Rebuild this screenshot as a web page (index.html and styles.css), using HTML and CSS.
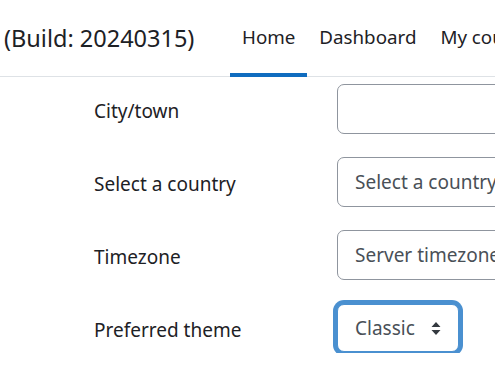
FILE: index.html
```html
<!DOCTYPE html>
<html lang="en">
<head>
<meta charset="utf-8">
<link rel="stylesheet" href="styles.css">
</head>
<body>
<header class="navbar">
  <div class="brand">(Build: 20240315)</div>
  <nav class="primary">
    <a class="nav-link active" href="#">Home</a>
    <a class="nav-link" href="#">Dashboard</a>
    <a class="nav-link" href="#">My courses</a>
  </nav>
</header>
<main class="form">
  <div class="row">
    <label class="label">City/town</label>
    <div class="field"><input class="control" type="text"></div>
  </div>
  <div class="row">
    <label class="label">Select a country</label>
    <div class="field"><div class="control select">Select a country...</div></div>
  </div>
  <div class="row">
    <label class="label">Timezone</label>
    <div class="field"><div class="control select">Server timezone (Europe/London)</div></div>
  </div>
  <div class="row">
    <label class="label">Preferred theme</label>
    <div class="field"><div class="control small focused">Classic
      <svg class="arrows" width="10" height="15" viewBox="0 0 10 15"><path d="M5 1 L9.5 6 H0.5 Z M5 14 L9.5 9 H0.5 Z" fill="#343a40"/></svg>
    </div></div>
  </div>
</main>
</body>
</html>
```
FILE: styles.css
```css
html, body {
  margin: 0;
  padding: 0;
  background: #fff;
  overflow: hidden;
}
body {
  font-family: "Noto Sans", "Open Sans", sans-serif;
  color: #1d2125;
  width: 495px;
}
.navbar {
  display: flex;
  align-items: stretch;
  height: 76px;
  border-bottom: 1px solid #dee2e6;
  white-space: nowrap;
}
.brand {
  display: flex;
  align-items: center;
  padding-left: 4px;
  font-size: 23.5px;
  width: 226px;
  flex: none;
}
.primary {
  display: flex;
  align-items: stretch;
}
.nav-link {
  display: flex;
  align-items: center;
  padding: 0 12px 0 12px;
  font-size: 18.75px;
  color: #1d2125;
  text-decoration: none;
  border-bottom: 4px solid transparent;
  margin-bottom: -1px;
}
.nav-link.active {
  border-bottom-color: #0f6cbf;
}
.form {
  display: flex;
  flex-direction: column;
  gap: 23px;
  padding-top: 7px;
}
.row {
  display: flex;
  align-items: center;
  height: 50px;
}
.label {
  width: 243px;
  padding-left: 94px;
  padding-top: 3px;
  flex: none;
  font-size: 19px;
}
.field {
  flex: none;
}
.control {
  box-sizing: border-box;
  height: 50px;
  width: 300px;
  border: 1px solid #8f959e;
  border-radius: 7px;
  font-family: inherit;
  font-size: 19px;
  color: #495057;
  padding: 0 17px;
  display: flex;
  align-items: center;
  white-space: nowrap;
  overflow: hidden;
  background: #fff;
}
.control.small {
  width: 122px;
  height: 48px;
  justify-content: space-between;
  padding: 0 17px 0 17px;
}
.focused {
  border-color: #4a90d0;
  box-shadow: 0 0 0 4px #4a90d0;
}
.arrows {
  flex: none;
}
```
